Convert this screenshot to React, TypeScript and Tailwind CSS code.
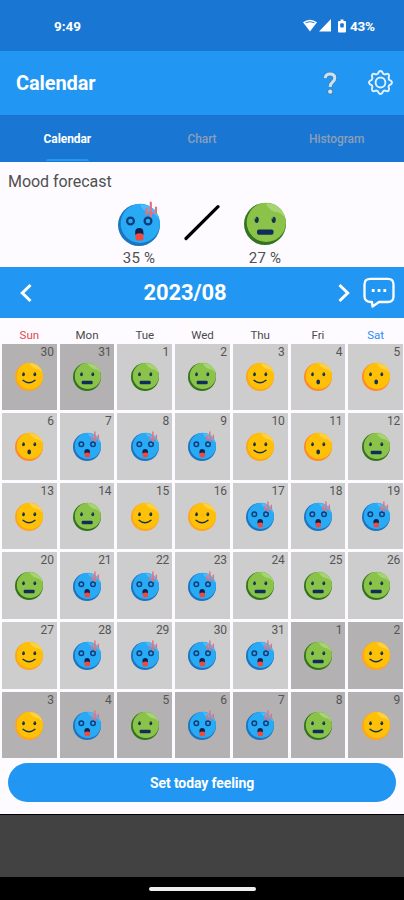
import React from "react";

type Mood = "good" | "flat" | "wow" | "shock";

const weekdays = ["Sun", "Mon", "Tue", "Wed", "Thu", "Fri", "Sat"];

const days: { day: number; mood: Mood; other?: boolean }[] = [
  { day: 30, mood: "good", other: true },
  { day: 31, mood: "flat", other: true },
  { day: 1, mood: "flat" },
  { day: 2, mood: "flat" },
  { day: 3, mood: "good" },
  { day: 4, mood: "wow" },
  { day: 5, mood: "wow" },
  { day: 6, mood: "wow" },
  { day: 7, mood: "shock" },
  { day: 8, mood: "shock" },
  { day: 9, mood: "shock" },
  { day: 10, mood: "good" },
  { day: 11, mood: "wow" },
  { day: 12, mood: "flat" },
  { day: 13, mood: "good" },
  { day: 14, mood: "flat" },
  { day: 15, mood: "good" },
  { day: 16, mood: "good" },
  { day: 17, mood: "shock" },
  { day: 18, mood: "shock" },
  { day: 19, mood: "shock" },
  { day: 20, mood: "flat" },
  { day: 21, mood: "shock" },
  { day: 22, mood: "shock" },
  { day: 23, mood: "shock" },
  { day: 24, mood: "flat" },
  { day: 25, mood: "flat" },
  { day: 26, mood: "flat" },
  { day: 27, mood: "good" },
  { day: 28, mood: "shock" },
  { day: 29, mood: "shock" },
  { day: 30, mood: "shock" },
  { day: 31, mood: "shock" },
  { day: 1, mood: "flat", other: true },
  { day: 2, mood: "good", other: true },
  { day: 3, mood: "good", other: true },
  { day: 4, mood: "shock", other: true },
  { day: 5, mood: "flat", other: true },
  { day: 6, mood: "shock", other: true },
  { day: 7, mood: "shock", other: true },
  { day: 8, mood: "flat", other: true },
  { day: 9, mood: "good", other: true },
];

// base, shadow and highlight of each face
const colors: Record<Mood, [string, string, string]> = {
  good: ["#ffc107", "#ffa51a", "#ffd142"],
  wow: ["#ffc107", "#ff8a2b", "#ffd142"],
  flat: ["#8bc34a", "#33731f", "#a6d474"],
  shock: ["#29aaf5", "#1b74c0", "#4dbcf8"],
};

const Face = ({ mood, className }: { mood: Mood; className: string }) => {
  const [base, shadow, light] = colors[mood];
  return (
    <svg viewBox="0 0 42 42" className={`overflow-visible ${className}`}>
      <circle cx="21" cy="21" r="21" fill={shadow} />
      <circle cx="22.3" cy="19.4" r="19.6" fill={base} />
      <path d="M22 0.500C32 0.500 39 6 41 14.500C38.500 12 36.500 9.500 32 9C27.500 8.500 24 5 22 0.500Z" fill={light} />
      {mood === "shock" ? (
        <>
          <circle cx="12.500" cy="17" r="3.400" fill="none" stroke="#0d3c78" strokeWidth="2.200" />
          <circle cx="30" cy="17" r="3.400" fill="none" stroke="#0d3c78" strokeWidth="2.200" />
          <path d="M17.200 31V28a4.100 4.100 0 0 1 8.200 0v3Z" fill="#0d2350" />
          <path d="M17.500 30.500q4-2.500 8 0V34q0 2.500-2 2.500h-4q-2 0-2-2.500Z" fill="#f04a40" />
          <path d="M28.500 5v5M32.800-1.500V12.500M38 3.500v5" stroke="#e8707c" strokeWidth="2.200" strokeLinecap="round" fill="none" />
          <path d="M29 10q3-4 8 0" stroke="#e8707c" strokeWidth="1.500" fill="none" />
        </>
      ) : (
        <>
          <ellipse cx="12.700" cy="16.800" rx="2.100" ry="3.100" fill="#15304f" />
          <ellipse cx="29.700" cy="16.800" rx="2.100" ry="3.100" fill="#15304f" />
          <circle cx="11.500" cy="15" r="0.800" fill={base} />
          <circle cx="28.500" cy="15" r="0.800" fill={base} />
        </>
      )}
      {mood === "flat" && <rect x="13" y="26.500" width="16.500" height="5.200" rx="1.800" fill="#0f2d5a" />}
      {mood === "wow" && <ellipse cx="21.300" cy="28.500" rx="2.800" ry="3.600" fill="#15304f" />}
      {mood === "good" && (
        <path d="M12 26Q21 33.500 30 26" stroke="#15304f" strokeWidth="2.100" strokeLinecap="round" fill="none" />
      )}
    </svg>
  );
};

const StatusBar = () => (
  <div className="flex h-[51px] justify-between bg-[#1976d2] pl-[54px] pr-[27px] text-[13.500px] font-bold leading-[52px] text-white">
    <span>9:49</span>
    <div className="flex items-center">
      <svg className="h-[13px] w-[14px]" viewBox="0 0 14 13">
        <path d="M0 3.200Q7-1.800 14 3.200L7 12.500Z" fill="#fff" />
        <path d="M2.500 3.800Q7 1.500 11.500 3.800" stroke="#1976d2" strokeWidth="0.900" fill="none" />
      </svg>
      <svg className="ml-[2px] h-[13px] w-[12px]" viewBox="0 0 12 13">
        <path d="M0 12.500L12 0V12.500Z" fill="#fff" />
      </svg>
      <svg className="ml-[7px] h-[14px] w-[8px]" viewBox="0 0 8 14">
        <path d="M2.500 0.500h3v1.500H7q1 0 1 1V12.500q0 1-1 1H1q-1 0-1-1V3q0-1 1-1h1.500Z" fill="#fff" />
        <rect x="2.200" y="4.200" width="3.600" height="4.200" rx="1" fill="#1976d2" />
      </svg>
      <span className="ml-[4px] w-[27px] whitespace-nowrap tracking-[-0.200px]">43%</span>
    </div>
  </div>
);

const App = () => {
  return (
    <div className="flex h-[900px] w-[404px] flex-col overflow-hidden bg-[#fdfbff] font-[Roboto,sans-serif]">
      <StatusBar />

      <div className="flex h-[64px] items-center bg-[#2196f3] pl-4 text-white">
        <h1 className="flex-1 text-[20px] font-bold tracking-[-0.100px]">Calendar</h1>
        <svg className="mr-[30px] h-[24px] w-[16px]" viewBox="0 0 16 24" fill="none">
          <path d="M3.200 7.200Q3.500 3 8 3Q12.800 3 12.800 7Q12.800 9.300 10.500 11.200Q8.200 13 8.200 16.200" stroke="#4f7f9f" strokeWidth="4.600" />
          <path d="M3.200 7.200Q3.500 3 8 3Q12.800 3 12.800 7Q12.800 9.300 10.500 11.200Q8.200 13 8.200 16" stroke="#c3e4fb" strokeWidth="3" />
          <circle cx="8.200" cy="20.700" r="2.900" fill="#4f7f9f" />
          <circle cx="8.200" cy="20.700" r="2.100" fill="#c3e4fb" />
        </svg>
        <svg className="mb-[2px] mr-[11px] h-[25px] w-[25px]" viewBox="0 0 24 24" fill="none" stroke="#dff0fe" strokeWidth="1.900" strokeLinejoin="round">
          <path d="M12 1Q13.600 1 14.500 3.600Q15.500 4.300 16.600 4.200Q18.600 3.200 19.800 4.200Q20.800 5.400 19.800 7.400Q19.700 8.500 20.400 9.500Q23 10.400 23 12Q23 13.600 20.400 14.500Q19.700 15.500 19.800 16.600Q20.800 18.600 19.800 19.800Q18.600 20.800 16.600 19.800Q15.500 19.700 14.500 20.400Q13.600 23 12 23Q10.400 23 9.500 20.400Q8.500 19.700 7.400 19.800Q5.400 20.800 4.200 19.800Q3.200 18.600 4.200 16.600Q4.300 15.500 3.600 14.500Q1 13.600 1 12Q1 10.400 3.600 9.500Q4.300 8.500 4.200 7.400Q3.200 5.400 4.200 4.200Q5.400 3.200 7.400 4.200Q8.500 4.300 9.500 3.600Q10.400 1 12 1Z" />
          <circle cx="12" cy="12" r="4.700" />
        </svg>
      </div>

      <div className="grid h-[47px] grid-cols-3 bg-[#1976d2] text-center text-[12px] font-bold leading-[48px] tracking-[-0.100px] text-[#8c9fb8]">
        <div className="flex flex-col items-center text-white">
          <span className="h-[44px]">Calendar</span>
          <div className="h-[2px] w-[43px] rounded-t-sm bg-[#2196f3]" />
        </div>
        <div className="font-medium">Chart</div>
        <div className="font-medium">Histogram</div>
      </div>

      <div className="h-[105px] pt-[8px] text-[#505050]">
        <p className="pl-[8px] text-[16px] leading-[23px] tracking-[-0.050px]">Mood forecast</p>
        <div className="flex justify-center pt-[8px]">
          <div className="flex w-[44px] flex-col items-center">
            <Face mood="shock" className="mt-[3px] h-[42px] w-[42px]" />
            <span className="mt-[3px] whitespace-nowrap text-[15px] leading-[18px] tracking-[0.200px]">35 %</span>
          </div>
          <svg className="mx-[22px] mt-[4px] h-[36px] w-[38px]" viewBox="0 0 38 36">
            <path d="M3 33.500L35 1.700" stroke="#000" strokeWidth="3.200" strokeLinecap="round" />
          </svg>
          <div className="flex w-[44px] flex-col items-center">
            <Face mood="flat" className="mt-[2px] h-[42px] w-[42px]" />
            <span className="mt-[4px] whitespace-nowrap text-[15px] leading-[18px] tracking-[0.200px]">27 %</span>
          </div>
        </div>
      </div>

      <div className="flex h-[51px] items-center bg-[#2196f3] pl-[20px] pr-[9px] text-white">
        <svg className="h-[20px] w-[12px]" viewBox="0 0 12 20" fill="none" stroke="#fff" strokeWidth="3">
          <path d="M10.500 2L2.300 10L10.500 18" />
        </svg>
        <span className="flex-1 text-center text-[22px] font-bold leading-[53px] tracking-[-0.100px]">2023/08</span>
        <svg className="h-[20px] w-[12px]" viewBox="0 0 12 20" fill="none" stroke="#fff" strokeWidth="3">
          <path d="M1.500 2L9.700 10L1.500 18" />
        </svg>
        <svg className="ml-[13px] h-[31px] w-[32px]" viewBox="0 0 32 31" fill="none" stroke="#fff" strokeWidth="2.300">
          <path d="M7.500 1.800H25Q30.500 1.800 30.500 7.300V19.500Q30.500 25 25 25H16L9.500 29.500L9 25H7.500Q1.500 24.500 1.500 19.500V7.300Q1.500 1.800 7.500 1.800Z" strokeLinejoin="round" />
          <path d="M8.800 13.500h2.800M14.600 13.500h2.800M20.400 13.500h2.800" strokeWidth="2.800" />
        </svg>
      </div>

      <div className="grid h-[25.500px] grid-cols-7 gap-[3px] pl-[2px] pr-[1px] pt-[9px] text-center text-[11.500px] leading-[17px] text-[#4a4a4a]">
        {weekdays.map((name) => (
          <span key={name} className={name === "Sun" ? "text-[#e5484d]" : name === "Sat" ? "text-[#2f8af5]" : ""}>
            {name}
          </span>
        ))}
      </div>

      <div className="grid h-[415px] shrink-0 grid-cols-7 grid-rows-6 gap-[3px] pl-[2px] pr-[1px]">
        {days.map((d, i) => (
          <div key={i} className={`relative flex items-center justify-center ${d.other ? "bg-[#b3b1b2]" : "bg-[#cecdce]"}`}>
            <span className="absolute right-[3px] top-[1px] text-[12px] leading-[15px] tracking-[-0.200px] text-[#555]">{d.day}</span>
            <Face mood={d.mood} className={d.mood === "shock" ? "mt-[2px] h-[28px] w-[28px]" : "mt-[1px] h-[28px] w-[28px]"} />
          </div>
        ))}
      </div>

      <div className="h-[55.500px] px-[8px] pt-[4.500px]">
        <button className="block h-[39px] w-full rounded-full bg-[#2196f3] pt-[1px] text-[14px] font-bold tracking-[-0.100px] text-white">
          Set today feeling
        </button>
      </div>

      <div className="h-[63px] border-t border-black bg-[#424242]" />
      <div className="flex flex-1 justify-center bg-black pt-[10px]">
        <div className="h-[4px] w-[107px] rounded-full bg-[#eee]" />
      </div>
    </div>
  );
};

export default App;
